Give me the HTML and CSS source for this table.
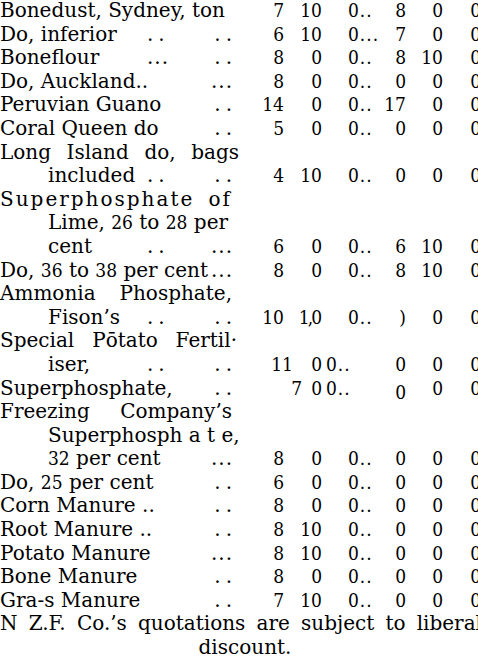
FILE: index.html
```html
<!DOCTYPE html>
<html>
<head>
<meta charset="utf-8">
<link rel="stylesheet" href="styles.css">
</head>
<body>
<div class="page">
  <div class="row"><div class="label"><span class="txt wide">Bonedust, Sydney, ton</span></div><span class="n">7</span><span class="n">10</span><span class="n c3">0..</span><span class="n">8</span><span class="n">0</span><span class="n">0</span></div>
  <div class="row"><div class="label"><span class="txt">Do, inferior</span><span class="dd">..</span><span class="dd end">..</span></div><span class="n">6</span><span class="n">10</span><span class="n c3">0...</span><span class="n">7</span><span class="n">0</span><span class="n">0</span></div>
  <div class="row"><div class="label"><span class="txt">Boneflour</span><span class="ddd">...</span><span class="dd end">..</span></div><span class="n">8</span><span class="n">0</span><span class="n c3">0..</span><span class="n">8</span><span class="n">10</span><span class="n">0</span></div>
  <div class="row"><div class="label"><span class="txt wide">Do, Auckland..</span><span class="ddd end">...</span></div><span class="n">8</span><span class="n">0</span><span class="n c3">0..</span><span class="n">0</span><span class="n">0</span><span class="n">0</span></div>
  <div class="row"><div class="label"><span class="txt wide">Peruvian Guano</span><span class="dd end">..</span></div><span class="n">14</span><span class="n">0</span><span class="n c3">0..</span><span class="n">17</span><span class="n">0</span><span class="n">0</span></div>
  <div class="row"><div class="label"><span class="txt wide">Coral Queen do</span><span class="dd end">..</span></div><span class="n">5</span><span class="n">0</span><span class="n c3">0..</span><span class="n">0</span><span class="n">0</span><span class="n">0</span></div>
  <div class="row"><div class="label"><span class="just long">Long Island do, bags</span></div></div>
  <div class="row"><div class="label ind"><span class="txt">included</span><span class="dd">..</span><span class="dd end">..</span></div><span class="n">4</span><span class="n">10</span><span class="n c3">0..</span><span class="n">0</span><span class="n">0</span><span class="n">0</span></div>
  <div class="row"><div class="label"><span class="just spaced">Superphosphate of</span></div></div>
  <div class="row"><div class="label ind"><span class="txt wide">Lime, <span class="fig">26</span> to <span class="fig">28</span> per</span></div></div>
  <div class="row"><div class="label ind"><span class="txt">cent</span><span class="dd">..</span><span class="ddd end">...</span></div><span class="n">6</span><span class="n">0</span><span class="n c3">0..</span><span class="n">6</span><span class="n">10</span><span class="n">0</span></div>
  <div class="row"><div class="label"><span class="txt wide">Do, <span class="fig">36</span> to <span class="fig">38</span> per cent</span><span class="ddd end">...</span></div><span class="n">8</span><span class="n">0</span><span class="n c3">0..</span><span class="n">8</span><span class="n">10</span><span class="n">0</span></div>
  <div class="row"><div class="label"><span class="just">Ammonia Phosphate,</span></div></div>
  <div class="row"><div class="label ind"><span class="txt">Fison’s</span><span class="dd">..</span><span class="dd end">..</span></div><span class="n">10</span><span class="n">1<span class="tick">,</span>0</span><span class="n c3">0..</span><span class="n">)</span><span class="n">0</span><span class="n">0</span></div>
  <div class="row"><div class="label"><span class="just wider">Special Pōtato Fertil·</span></div></div>
  <div class="row"><div class="label ind"><span class="txt">iser,</span><span class="dd">..</span><span class="dd end">..</span></div><span class="n shift-a">11</span><span class="n">0</span><span class="n c3 tight">0..</span><span class="n">0</span><span class="n">0</span><span class="n">0</span></div>
  <div class="row"><div class="label"><span class="txt wide">Superphosphate,</span><span class="dd end">..</span></div><span class="n shift-b">7</span><span class="n">0</span><span class="n c3 tight">0..</span><span class="n"><span class="low">0</span></span><span class="n">0</span><span class="n">0</span></div>
  <div class="row"><div class="label"><span class="just">Freezing Company’s</span></div></div>
  <div class="row"><div class="label ind"><span class="just">Superphosph a t e,</span></div></div>
  <div class="row"><div class="label ind"><span class="txt wide"><span class="fig">32</span> per cent</span><span class="ddd end">...</span></div><span class="n">8</span><span class="n">0</span><span class="n c3">0..</span><span class="n">0</span><span class="n">0</span><span class="n">0</span></div>
  <div class="row"><div class="label"><span class="txt wide">Do, <span class="fig">25</span> per cent</span><span class="dd end">..</span></div><span class="n">6</span><span class="n">0</span><span class="n c3">0..</span><span class="n">0</span><span class="n">0</span><span class="n">0</span></div>
  <div class="row"><div class="label"><span class="txt wide">Corn Manure ..</span><span class="dd end">..</span></div><span class="n">8</span><span class="n">0</span><span class="n c3">0..</span><span class="n">0</span><span class="n">0</span><span class="n">0</span></div>
  <div class="row"><div class="label"><span class="txt wide">Root Manure ..</span><span class="dd end">..</span></div><span class="n">8</span><span class="n">10</span><span class="n c3">0..</span><span class="n">0</span><span class="n">0</span><span class="n">0</span></div>
  <div class="row"><div class="label"><span class="txt wide">Potato Manure</span><span class="ddd end">...</span></div><span class="n">8</span><span class="n">10</span><span class="n c3">0..</span><span class="n">0</span><span class="n">0</span><span class="n">0</span></div>
  <div class="row"><div class="label"><span class="txt wide">Bone Manure</span><span class="dd end">..</span></div><span class="n">8</span><span class="n">0</span><span class="n c3">0..</span><span class="n">0</span><span class="n">0</span><span class="n">0</span></div>
  <div class="row"><div class="label"><span class="txt wide">Gra-s Manure</span><span class="dd end">..</span></div><span class="n">7</span><span class="n">10</span><span class="n c3">0..</span><span class="n">0</span><span class="n">0</span><span class="n">0</span></div>
  <div class="note">N Z.F. Co.’s quotations are subject to liberal</div>
  <div class="note center">discount.</div>
</div>
</body>
</html>
```
FILE: styles.css
```css
html, body {
  margin: 0;
  padding: 0;
  background: #fff;
}
body {
  width: 478px;
  height: 658px;
  overflow: hidden;
  font-family: "DejaVu Serif", "Liberation Serif", serif;
  font-size: 20px;
  color: #000;
}
.page {
  display: flex;
  flex-direction: column;
  margin-top: -1px;
}
.row {
  display: grid;
  grid-template-columns: 240px 44px 38px 58px 26px 37px 38px;
  height: 23.6px;
  line-height: 23.6px;
  white-space: nowrap;
}
.label {
  display: grid;
  grid-template-columns: 147px 1fr auto;
  padding-right: 8px;
}
.label.ind {
  padding-left: 48px;
  grid-template-columns: 99px 1fr auto;
}
.txt.wide {
  grid-column: 1 / 3;
}
.just {
  grid-column: 1 / -1;
  text-align: justify;
  text-align-last: justify;
}
.just.long {
  margin-right: -7px;
}
.just.wider {
  margin-right: -5px;
}
.just.spaced {
  letter-spacing: 2px;
}
.dd {
  letter-spacing: 5px;
  margin-right: -5px;
}
.ddd {
  letter-spacing: 1px;
  margin-right: -1px;
}
.end {
  grid-column: 3;
  text-align: right;
}
.fig {
  font-family: "DejaVu Serif Condensed", "Liberation Serif", serif;
  font-size: 19px;
}
.n {
  font-family: "DejaVu Serif Condensed", "Liberation Serif", serif;
  font-size: 19px;
  text-align: right;
}
.n.shift-a {
  margin-right: -9px;
}
.n.shift-b {
  margin-right: -18px;
}
.n.c3 {
  text-align: left;
  padding-left: 26px;
  letter-spacing: 1px;
}
.n.c3.tight {
  padding-left: 4px;
}
.tick {
  margin: 0 -2px;
}
.low {
  display: inline-block;
  vertical-align: -4px;
}
.note {
  width: 482px;
  height: 23.6px;
  line-height: 23.6px;
  white-space: nowrap;
  text-align: justify;
  text-align-last: justify;
}
.note.center {
  width: 478px;
  text-align: center;
  text-align-last: center;
  padding-left: 12px;
  box-sizing: border-box;
}
```
